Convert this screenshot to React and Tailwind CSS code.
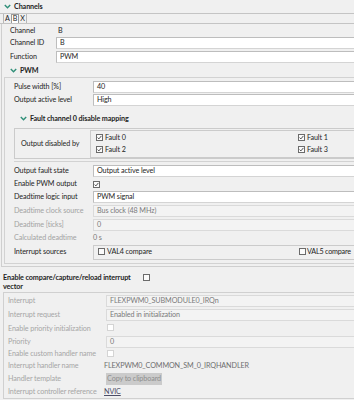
import React from 'react';

function Chevron() {
  return (
    <svg width="7" height="5" viewBox="0 0 7 5" className="shrink-0">
      <path d="M0.8 0.9 L3.5 3.7 L6.2 0.9" fill="none" stroke="#2f8f78" strokeWidth="1.4" />
    </svg>
  );
}

function Check({ checked, disabled }) {
  return (
    <span
      className={
        disabled
          ? 'inline-flex shrink-0 items-center justify-center w-[7px] h-[7px] border border-[#d4d4d4] bg-white'
          : 'inline-flex shrink-0 items-center justify-center w-[7px] h-[7px] border border-[#6b6b6b] bg-[#fbfbfb]'
      }
    >
      {checked && (
        <svg width="5" height="5" viewBox="0 0 5 5">
          <path d="M0.6 2.6 L1.9 3.9 L4.4 0.9" fill="none" stroke="#3c3c3c" strokeWidth="0.9" />
        </svg>
      )}
    </span>
  );
}

function Input({ children }) {
  return (
    <div className="flex-1 h-[12px] flex items-center pl-[3px] bg-white border-t border-b border-l border-[#bdbdbd] border-b-[#d4d4d4]">
      {children}
    </div>
  );
}

function Disabled({ children }) {
  return (
    <div className="flex-1 h-[12px] flex items-center pl-[3px] bg-[#f3f3f3] border-t border-b border-l border-[#dadada] text-[#7a7a7a]">
      {children}
    </div>
  );
}

function PwmRow({ label, h, dim, children }) {
  return (
    <div className={`flex items-center ${h}`}>
      <div className={`w-[88px] pl-[9px] shrink-0 ${dim ? 'text-[#a3a3a3]' : ''}`}>{label}</div>
      {children}
    </div>
  );
}

function IrqRow({ label, h, children }) {
  return (
    <div className={`flex items-center ${h}`}>
      <div className="w-[102px] pl-[4px] shrink-0 text-[#a6a6a6]">{label}</div>
      {children}
    </div>
  );
}

export default function App() {
  return (
    <div className="w-[354px] h-[400px] overflow-hidden whitespace-nowrap bg-[#f0f0f0] text-[7.2px] tracking-[-0.1px] leading-none text-[#1e1e1e] font-['Lato',sans-serif]">
      {/* Channels header */}
      <div className="h-[14px] flex items-center gap-[3px] pl-[4px] border-b border-[#c4c4c4]">
        <Chevron />
        <span className="font-bold">Channels</span>
      </div>

      {/* Tabs */}
      <div className="h-[10px] flex items-stretch pl-[3px] border-b border-[#c4c4c4]">
        <div className="w-[8px] flex items-center justify-center border-l border-[#b8b8b8]">A</div>
        <div className="w-[8px] flex items-center justify-center border border-b-0 border-[#9a9a9a] bg-white">B</div>
        <div className="w-[8px] flex items-center justify-center border-r border-[#b8b8b8]">X</div>
      </div>

      {/* Channel panel */}
      <div className="ml-[1px] border-l border-b border-[#cfcfcf] pb-[2px]">
        <div className="flex items-center h-[13px]">
          <div className="w-[54px] pl-[8px] shrink-0">Channel</div>
          <div className="pl-[2px]">B</div>
        </div>
        <div className="flex items-start h-[14px]">
          <div className="w-[54px] pl-[8px] shrink-0 h-[12px] flex items-center">Channel ID</div>
          <Input>B</Input>
        </div>
        <div className="flex items-start h-[13px]">
          <div className="w-[54px] pl-[8px] shrink-0 h-[12px] flex items-center">Function</div>
          <Input>PWM</Input>
        </div>

        {/* PWM group */}
        <div className="ml-[2px]">
          <div className="h-[13px] flex items-center gap-[3px] pl-[6px]">
            <Chevron />
            <span className="font-bold">PWM</span>
          </div>
          <div className="border-t border-l border-b border-[#d2d2d2] pt-[2px] pb-[3px]">
            <PwmRow label="Pulse width [%]" h="h-[13px]">
              <Input>40</Input>
            </PwmRow>
            <PwmRow label="Output active level" h="h-[13px]">
              <Input>High</Input>
            </PwmRow>

            {/* Fault group */}
            <div className="ml-[9px] pb-[2px] border-b border-[#d2d2d2]">
              <div className="h-[13px] mt-[6px] flex items-center gap-[3px] pl-[6px]">
                <Chevron />
                <span className="font-bold">Fault channel 0 disable mapping</span>
              </div>
              <div className="mt-[3px] h-[31px] flex items-center border-t border-l border-b border-[#cbcbcb]">
                <div className="w-[75px] pl-[6px] shrink-0">Output disabled by</div>
                <div className="flex-1 h-[28px] border-t border-l border-b border-[#cbcbcb] grid grid-cols-[202px_1fr] content-center gap-y-[5px] pl-[5px]">
                  <div className="flex items-center gap-[2px]"><Check checked />Fault 0</div>
                  <div className="flex items-center gap-[2px]"><Check checked />Fault 1</div>
                  <div className="flex items-center gap-[2px]"><Check checked />Fault 2</div>
                  <div className="flex items-center gap-[2px]"><Check checked />Fault 3</div>
                </div>
              </div>
            </div>

            <div className="mt-[2px]">
              <PwmRow label="Output fault state" h="h-[14px]">
                <Input>Output active level</Input>
              </PwmRow>
            </div>
            <PwmRow label="Enable PWM output" h="h-[12px]">
              <Check checked />
            </PwmRow>
            <PwmRow label="Deadtime logic input" h="h-[14px]">
              <Input>PWM signal</Input>
            </PwmRow>
            <PwmRow label="Deadtime clock source" h="h-[14px]" dim>
              <Disabled>Bus clock (48 MHz)</Disabled>
            </PwmRow>
            <PwmRow label="Deadtime [ticks]" h="h-[13px]" dim>
              <Disabled>0</Disabled>
            </PwmRow>
            <PwmRow label="Calculated deadtime" h="h-[13px]" dim>
              <div className="text-[#7a7a7a]">0 s</div>
            </PwmRow>
            <PwmRow label="Interrupt sources" h="h-[16px]">
              <div className="flex-1 h-[15px] border-t border-l border-b border-[#cbcbcb] grid grid-cols-[201px_1fr] items-center pl-[4px]">
                <div className="flex items-center gap-[2px]"><Check />VAL4 compare</div>
                <div className="flex items-center gap-[1px] tracking-[-0.2px]"><Check />VAL5 compare</div>
              </div>
            </PwmRow>
          </div>
        </div>
      </div>

      {/* Interrupt vector */}
      <div className="h-[25px] flex items-start pt-[6px] pl-[3px]">
        <div className="w-[140px] whitespace-normal font-bold leading-[9px]">Enable compare/capture/reload interrupt vector</div>
        <div className="mt-[1px]"><Check /></div>
      </div>
      <div className="ml-[3px] h-[107px] border-t border-l border-b border-[#d0d0d0] pt-[1px]">
        <IrqRow label="Interrupt" h="h-[14px]">
          <Disabled>FLEXPWM0_SUBMODULE0_IRQn</Disabled>
        </IrqRow>
        <IrqRow label="Interrupt request" h="h-[14px]">
          <Disabled>Enabled in initialization</Disabled>
        </IrqRow>
        <IrqRow label="Enable priority initialization" h="h-[13px]">
          <div className="pl-[1px]"><Check disabled /></div>
        </IrqRow>
        <IrqRow label="Priority" h="h-[13px]">
          <Disabled>0</Disabled>
        </IrqRow>
        <IrqRow label="Enable custom handler name" h="h-[12px]">
          <div className="pl-[1px]"><Check disabled /></div>
        </IrqRow>
        <IrqRow label="Interrupt handler name" h="h-[12px]">
          <div className="text-[#6e6e6e] -ml-[2px]">FLEXPWM0_COMMON_SM_0_IRQHANDLER</div>
        </IrqRow>
        <IrqRow label="Handler template" h="h-[13px]">
          <div className="w-[56px] h-[12px] flex items-center justify-center bg-[#cbcbcb] text-[#8e8e8e]">Copy to clipboard</div>
        </IrqRow>
        <IrqRow label="Interrupt controller reference" h="h-[13px]">
          <div className="-ml-[2px] text-[#4d4d66] underline">NVIC</div>
        </IrqRow>
      </div>
    </div>
  );
}
